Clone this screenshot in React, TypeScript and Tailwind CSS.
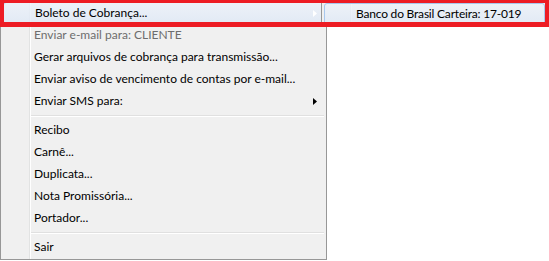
function Arrow({ white }: { white?: boolean }) {
  return (
    <svg width="4" height="7" viewBox="0 0 4 7" className="block">
      <polygon points="0,0 4,3.5 0,7" fill={white ? "#ffffff" : "#000000"} />
    </svg>
  );
}

function Item({
  label,
  disabled,
  arrow,
  hl,
  tight,
}: {
  label: string;
  disabled?: boolean;
  arrow?: boolean;
  hl?: boolean;
  tight?: boolean;
}) {
  return (
    <div
      className={
        "h-[22px] flex items-center pl-[31px] " +
        (hl
          ? "rounded-[3px] border border-[#a8c8ee] bg-[linear-gradient(to_bottom,rgba(236,242,250,0.8),rgba(222,232,246,0.8))] pl-[30px]"
          : "")
      }
    >
      <span
        className={
          "whitespace-nowrap " +
          (disabled ? "text-[#6d6d6d]" : "text-black") +
          (tight ? " tracking-[-0.2px]" : "")
        }
      >
        {label}
      </span>
      {arrow && (
        <span className={"ml-auto " + (hl ? "mr-[6px]" : "mr-[7px]")}>
          <Arrow white={hl} />
        </span>
      )}
    </div>
  );
}

function Sep() {
  return (
    <div className="h-[7px] pt-[3px] pl-[28px]">
      <div className="border-t border-[#e0e0e0] border-b border-b-white" />
    </div>
  );
}

export default function App() {
  return (
    <div className="relative w-[549px] h-[261px] bg-white overflow-hidden font-['Lato',sans-serif] text-[12px] leading-none">
      <div className="w-[327px] h-[260px] border border-[#979797] px-[2px] py-[1px] bg-[linear-gradient(to_right,#f0f0f0_28px,#e2e3e3_28px,#e2e3e3_29px,#ffffff_29px,#ffffff_30px,#f0f0f0_30px)] flex flex-col">
        <Item label="Boleto de Cobrança..." arrow hl />
        <Item label="Enviar e-mail para: CLIENTE" disabled />
        <Item label="Gerar arquivos de cobrança para transmissão..." />
        <Item label="Enviar aviso de vencimento de contas por e-mail..." />
        <Item label="Enviar SMS para:" arrow />
        <Sep />
        <Item label="Recibo" />
        <Item label="Carnê..." />
        <Item label="Duplicata..." />
        <Item label="Nota Promissória..." />
        <Item label="Portador..." />
        <Sep />
        <Item label="Sair" />
      </div>

      <div className="absolute left-[321px] top-0 w-[227px] h-[26px] border border-[#979797] p-[2px] bg-[linear-gradient(to_right,#f0f0f0_28px,#e2e3e3_28px,#e2e3e3_29px,#ffffff_29px,#ffffff_30px,#f0f0f0_30px)]">
        <Item label="Banco do Brasil Carteira: 17-019" hl tight />
      </div>

      <div className="absolute left-0 top-0 w-[549px] h-[27px] border-t-[3px] border-x-[4px] border-b-[5px] border-[#ed1c24] pointer-events-none" />
    </div>
  );
}
